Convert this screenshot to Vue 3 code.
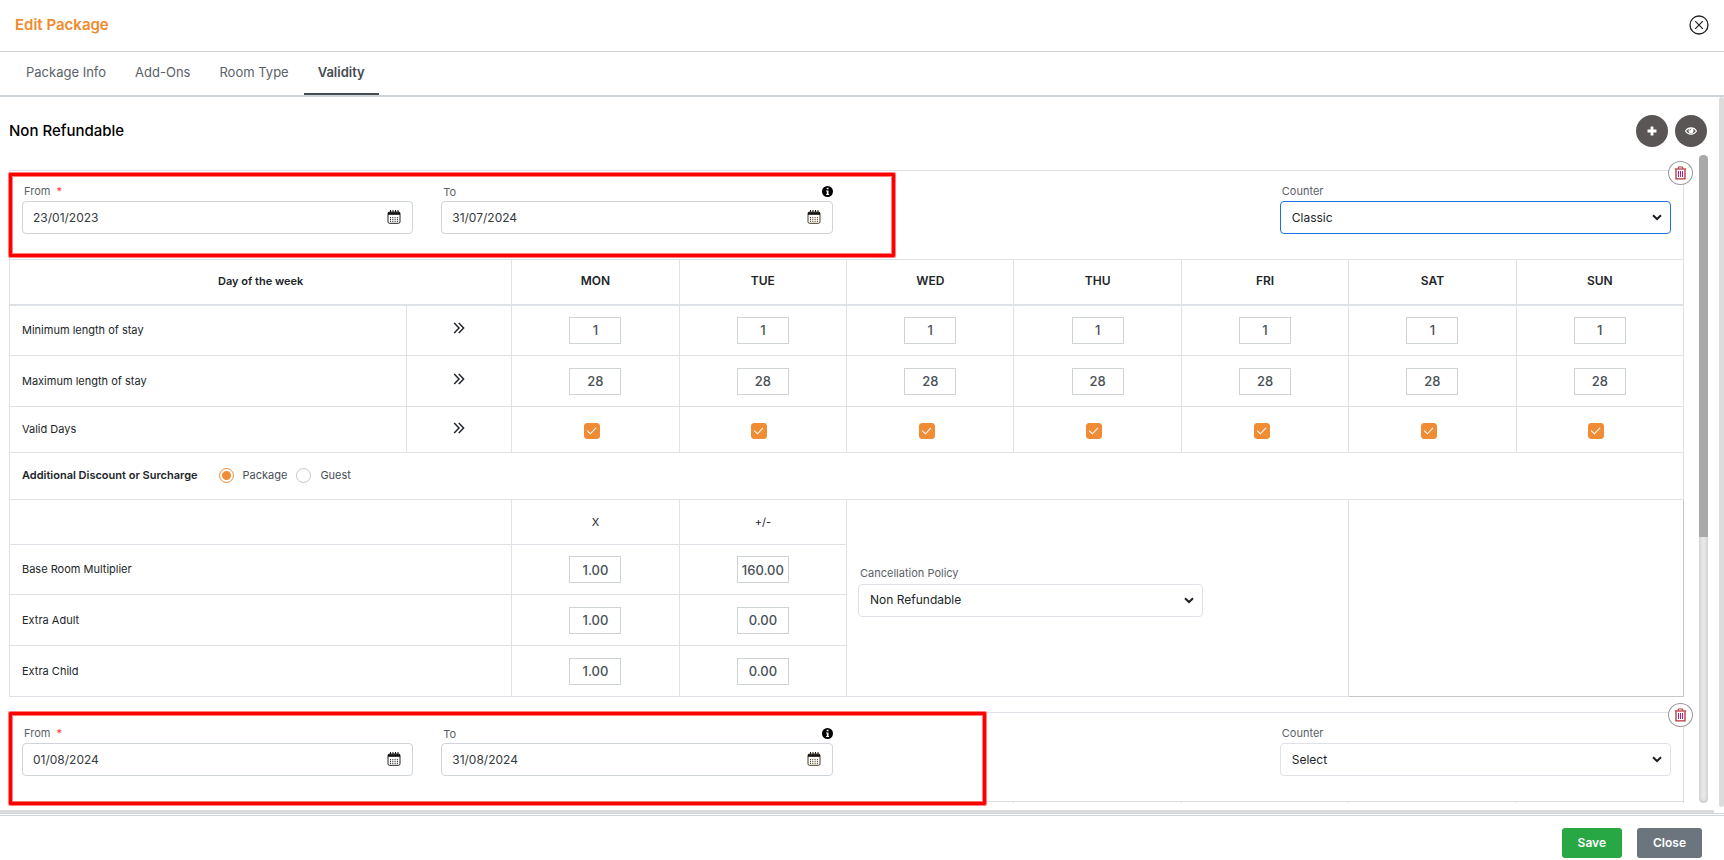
<script setup>
import { reactive } from 'vue'

const tabs = ['Package Info', 'Add-Ons', 'Room Type', 'Validity']
const activeTab = 'Validity'
const days = ['MON', 'TUE', 'WED', 'THU', 'FRI', 'SAT', 'SUN']

const periods = reactive([
  {
    id: 'p1', from: '23/01/2023', to: '31/07/2024', counter: 'Classic', focused: true, expanded: true,
    stay: [
      { label: 'Minimum length of stay', values: days.map(() => '1') },
      { label: 'Maximum length of stay', values: days.map(() => '28') }
    ],
    valid: days.map(() => true),
    basis: 'Package',
    rates: [
      { label: 'Base Room Multiplier', factor: '1.00', amount: '160.00' },
      { label: 'Extra Adult', factor: '1.00', amount: '0.00' },
      { label: 'Extra Child', factor: '1.00', amount: '0.00' }
    ],
    policy: 'Non Refundable'
  },
  { id: 'p2', from: '01/08/2024', to: '31/08/2024', counter: 'Select', focused: false, expanded: false }
])
</script>

<template>
  <div class="modal">
    <header class="modal-head">
      <h1>Edit Package</h1>
      <button class="icon-btn" type="button" aria-label="Dismiss">
        <svg width="20" height="20" viewBox="0 0 20 20" fill="none" stroke="#222">
          <circle cx="10" cy="10" r="9" stroke-width="1.3" />
          <path d="M6.2 6.2l7.6 7.6M13.8 6.2l-7.6 7.6" stroke-width="1.2" />
        </svg>
      </button>
    </header>

    <nav class="tabs">
      <a v-for="t in tabs" :key="t" href="#" :class="{ active: t === activeTab }">{{ t }}</a>
    </nav>

    <main class="body">
      <div class="pane">
        <div class="pane-head">
          <h2>Non Refundable</h2>
          <div class="actions">
            <button type="button" class="round" aria-label="Add">
              <svg width="10" height="10" viewBox="0 0 10 10"><path d="M5 .5v9M.5 5h9" stroke="#fff" stroke-width="2.8" /></svg>
            </button>
            <button type="button" class="round" aria-label="Preview">
              <svg width="12" height="8" viewBox="0 0 12 8">
                <path d="M.5 4C3 -.2 9 -.2 11.500 4 9 8.200 3 8.200 .5 4z" fill="none" stroke="#fff" stroke-width="1.100" />
                <circle cx="6" cy="3.700" r="2.500" fill="#fff" />
                <path d="M4.600 3.600A1.500 1.500 0 0 1 6 2.300" stroke="#5a5655" stroke-width=".7" fill="none" />
              </svg>
            </button>
          </div>
        </div>

        <div class="scroll-row">
          <div class="list-wrap">
            <div class="list">
              <section v-for="p in periods" :key="p.id" class="period">
                <table>
                  <colgroup>
                    <col />
                    <col class="c-arrow" />
                    <col v-for="d in days" :key="d" class="c-day" />
                  </colgroup>
                  <tbody>
                    <tr>
                      <td colspan="9" class="form-cell">
                        <div class="form">
                          <div class="field">
                            <label :for="p.id + '-from'">From&nbsp; <span class="req">*</span></label>
                            <div class="control">
                              <input :id="p.id + '-from'" v-model="p.from" type="text" />
                              <svg class="cal" width="14" height="14" viewBox="0 0 14 14">
                                <path d="M3.500 0v2M6 0v2M8.500 0v2M11 0v2" stroke="#111" />
                                <rect x="1" y="2" width="12" height="11.300" rx="1.500" fill="#fff" stroke="#222" />
                                <path d="M1 2.200h12v2.600H1z" fill="#111" />
                                <path d="M3.500 7v5M5.800 7v5M8.100 7v5M10.400 7v5" stroke="#333" stroke-dasharray="1.200 .7" />
                              </svg>
                            </div>
                          </div>
                          <div class="field">
                            <div class="label-line">
                              <label :for="p.id + '-to'">To</label>
                              <svg width="11" height="11" viewBox="0 0 11 11">
                                <circle cx="5.500" cy="5.500" r="5.500" />
                                <path d="M4.700 1.800h1.800v1.500H4.700zM4.200 4.400h2.300v3.500h.6v1.100H4.200V7.900h.6V5.500h-.6z" fill="#fff" />
                              </svg>
                            </div>
                            <div class="control">
                              <input :id="p.id + '-to'" v-model="p.to" type="text" />
                              <svg class="cal" width="14" height="14" viewBox="0 0 14 14">
                                <path d="M3.500 0v2M6 0v2M8.500 0v2M11 0v2" stroke="#111" />
                                <rect x="1" y="2" width="12" height="11.300" rx="1.500" fill="#fff" stroke="#4a3a20" />
                                <path d="M1 2.200h12v2.600H1z" fill="#111" />
                                <path d="M3.500 7v5M5.800 7v5M8.100 7v5M10.400 7v5" stroke="#5a4630" stroke-dasharray="1.200 .7" />
                              </svg>
                            </div>
                          </div>
                          <div class="field counter">
                            <label :for="p.id + '-counter'">Counter</label>
                            <div class="control">
                              <select :id="p.id + '-counter'" :class="{ focused: p.focused }">
                                <option>{{ p.counter }}</option>
                              </select>
                              <svg class="caret" width="10" height="7" viewBox="0 0 10 7"><path d="M1 1.200l4 3.800 4-3.800" fill="none" stroke="#1c2025" stroke-width="2" /></svg>
                            </div>
                          </div>
                        </div>
                      </td>
                    </tr>

                    <template v-if="p.expanded">
                      <tr class="week">
                        <th colspan="2" scope="col">Day of the week</th>
                        <th v-for="d in days" :key="d" scope="col" class="day">{{ d }}</th>
                      </tr>
                      <tr v-for="s in p.stay" :key="s.label" class="r-input">
                        <td class="name">{{ s.label }}</td>
                        <td class="arrow">
                          <button type="button" class="icon-btn" :aria-label="'Apply to all: ' + s.label">
                            <svg width="12" height="12" viewBox="0 0 12 12"><path d="M1.200 1l4.800 5-4.800 5M5.800 1l4.800 5-4.800 5" fill="none" stroke="#212529" stroke-width="1.500" /></svg>
                          </button>
                        </td>
                        <td v-for="(d, i) in days" :key="d" class="mid">
                          <input v-model="s.values[i]" class="num" type="text" :aria-label="s.label + ' ' + d" />
                        </td>
                      </tr>
                      <tr class="r-valid">
                        <td class="name">Valid Days</td>
                        <td class="arrow">
                          <button type="button" class="icon-btn" aria-label="Apply to all: Valid Days">
                            <svg width="12" height="12" viewBox="0 0 12 12"><path d="M1.200 1l4.800 5-4.800 5M5.800 1l4.800 5-4.800 5" fill="none" stroke="#212529" stroke-width="1.500" /></svg>
                          </button>
                        </td>
                        <td v-for="(d, i) in days" :key="d" class="mid">
                          <label class="check">
                            <input v-model="p.valid[i]" type="checkbox" :aria-label="'Valid ' + d" />
                            <svg width="16" height="16" viewBox="0 0 16 16"><path d="M3.200 7.600l3.200 3.200 5.600-6" fill="none" stroke="#fff" stroke-width="1.100" /></svg>
                          </label>
                        </td>
                      </tr>
                      <tr class="r-basis">
                        <td colspan="9" class="name">
                          <div class="basis">
                            <strong>Additional Discount or Surcharge</strong>
                            <label v-for="b in ['Package', 'Guest']" :key="b">
                              <input v-model="p.basis" type="radio" :name="p.id + '-basis'" :value="b" />{{ b }}
                            </label>
                          </div>
                        </td>
                      </tr>
                      <tr class="r-sub">
                        <td colspan="2"></td>
                        <td class="mid">X</td>
                        <td class="mid">+/-</td>
                        <td colspan="3" rowspan="4" class="policy">
                          <label :for="p.id + '-policy'">Cancellation Policy</label>
                          <div class="control">
                            <select :id="p.id + '-policy'"><option>{{ p.policy }}</option></select>
                            <svg class="caret" width="10" height="7" viewBox="0 0 10 7"><path d="M1 1.200l4 3.800 4-3.800" fill="none" stroke="#1c2025" stroke-width="2" /></svg>
                          </div>
                        </td>
                        <td colspan="2" rowspan="4" class="blank"></td>
                      </tr>
                      <tr v-for="r in p.rates" :key="r.label" class="r-input">
                        <td colspan="2" class="name">{{ r.label }}</td>
                        <td class="mid"><input v-model="r.factor" class="num" type="text" :aria-label="r.label + ' multiplier'" /></td>
                        <td class="mid"><input v-model="r.amount" class="num" type="text" :aria-label="r.label + ' amount'" /></td>
                      </tr>
                    </template>
                    <tr v-else class="week">
                      <td colspan="2"></td>
                      <td v-for="d in days" :key="d"></td>
                    </tr>
                  </tbody>
                </table>
                <button type="button" class="trash" aria-label="Delete period">
                  <svg width="13" height="14" viewBox="0 0 13 14" fill="none" stroke="#b5303a">
                    <path d="M.8 3h11.400" stroke-width="1.200" />
                    <path d="M4.300 2.800V1h4.400v1.800" />
                    <path d="M2 3.200v9.600h9V3.200" stroke-width="1.300" />
                    <path d="M4.500 5v6M6.500 5v6M8.500 5v6" stroke="#b0208a" />
                  </svg>
                </button>
              </section>
            </div>
            <div class="mark mark-a"></div>
            <div class="mark mark-b"></div>
          </div>
          <div class="bar" aria-hidden="true"><div class="thumb"></div></div>
        </div>
      </div>
      <div class="outer-v" aria-hidden="true"></div>
      <div class="outer-h" aria-hidden="true"></div>
    </main>

    <footer class="modal-foot">
      <button type="button" class="btn save">Save</button>
      <button type="button" class="btn close">Close</button>
    </footer>
  </div>
</template>

<style>
body { background: #fff; }
</style>

<style scoped>
* { box-sizing: border-box; }
.modal {
  display: flex;
  flex-direction: column;
  height: 100vh;
  overflow: hidden;
  background: #fff;
  color: #212529;
  font-family: Inter, "Liberation Sans", sans-serif;
  font-size: 11px;
  line-height: 18px;
}
button, input, select { font: inherit; color: inherit; margin: 0; }
h1, h2 { margin: 0; }
svg { display: block; }

.modal-head {
  display: flex;
  flex: none;
  align-items: center;
  justify-content: space-between;
  height: 52px;
  padding: 0 15px 2px;
  border-bottom: 1px solid #ced2d6;
}
h1 { color: #f08a2c; font-size: 15px; font-weight: 600; line-height: 24px; }
.icon-btn { padding: 0; border: 0; background: none; cursor: pointer; }

.tabs {
  display: flex;
  flex: none;
  gap: 1px;
  height: 45px;
  padding-left: 12px;
  border-bottom: 2px solid #ced4d8;
}
.tabs a {
  padding: 10px 14px 0;
  border-bottom: 2px solid transparent;
  color: #5b6168;
  font-size: 13px;
  line-height: 20px;
  text-decoration: none;
}
.tabs a.active { border-color: #454b52; color: #454b52; font-weight: 600; }

.body {
  display: grid;
  flex: 1;
  grid-template-columns: minmax(0, 1fr) 5px;
  grid-template-rows: minmax(0, 1fr) 3px;
  column-gap: 1px;
  min-height: 0;
  border-bottom: 1px solid #ced4da;
}
.outer-v { margin-bottom: 3px; background: #dcdcdc; border-radius: 3px; }
.outer-h { margin-right: 4px; background: #dcdcdc; }
.pane { display: flex; flex-direction: column; min-height: 0; padding: 18px 10px 7px 9px; }
.pane-head { display: flex; flex: none; align-items: center; justify-content: space-between; height: 40px; padding-bottom: 8px; }
h2 { color: #000; font-size: 15px; font-weight: 500; line-height: 24px; }
.actions { display: flex; gap: 7px; margin-right: 1px; }
.round {
  display: grid;
  place-items: center;
  width: 32px;
  height: 32px;
  padding: 0;
  border: 0;
  border-radius: 50%;
  background: #5a5655;
}

.scroll-row { display: flex; flex: 1; gap: 5px; min-height: 0; }
.list-wrap { position: relative; flex: 1; min-width: 0; }
.list { height: 100%; padding: 15px 10px 0 0; overflow: hidden; }
.bar { width: 9px; border-radius: 5px; background: #e9e9e9; box-shadow: inset 0 0 4px #b5b5b5; }
.thumb { height: 59%; border-radius: 5px 5px 0 0; background: #a9a9a9; }

.period { position: relative; margin-bottom: 15px; }
table { width: 100%; border-collapse: collapse; table-layout: fixed; }
td, th { padding: 0 12px; border: 1px solid #dee2e6; vertical-align: middle; }
.c-arrow { width: 105px; }
.c-day { width: 10%; }
.form-cell { height: 89px; padding-top: 11px; vertical-align: top; }
.form { display: grid; grid-template-columns: repeat(4, minmax(0, 1fr)); column-gap: 28px; }
.counter { grid-column: 4; }
label { color: #5b6168; }
.field > label, .label-line label, .policy > label { display: block; padding: 0 2px; }
.field > label, .label-line { height: 19px; }
.label-line { display: flex; align-items: center; justify-content: space-between; }
.req { color: #f33; }
.control { position: relative; }
.control input, select {
  display: block;
  width: 100%;
  height: 33px;
  padding: 0 10px;
  border: 1px solid #ced4da;
  border-radius: 4px;
  background: #fff;
  color: #343a40;
  font-size: 12px;
  outline: 0;
}
.control select { appearance: none; padding: 0 11px; border-color: #dee2e6; color: #212529; }
.control select.focused { border-color: #1b74e4; }
.cal { position: absolute; top: 9px; right: 12px; }
.caret { position: absolute; top: 13px; right: 9px; pointer-events: none; }

.week th, .week td { height: 45px; border-bottom-width: 2px; }
.week th { padding-bottom: 2px; font-weight: 600; text-align: center; }
.week .day { font-size: 12px; }
.r-input td { height: 51px; }
.r-input .name, .r-valid .name { padding-bottom: 1px; }
.r-valid td { height: 46px; }
.r-basis td { height: 47px; padding-bottom: 2px; }
.r-sub td { height: 45px; }
.r-sub + .r-input td { height: 50px; }
.mid { text-align: center; }
.arrow { text-align: center; }
.arrow svg { display: inline-block; }
.num {
  display: block;
  width: 52px;
  height: 27px;
  margin: 0 auto;
  padding: 0;
  border: 1px solid #ced4d6;
  border-radius: 0;
  color: #495057;
  font-size: 13px;
  font-weight: 500;
  text-align: center;
}
.check { display: inline-grid; margin: 2px 7px 0 0; vertical-align: middle; }
.check > * { grid-area: 1 / 1; }
.check input { appearance: none; width: 16px; height: 16px; border-radius: 3px; border: 1px solid #ccc; }
.check input:checked { border-color: #f08c34; background: #f08c34; }
.basis { display: flex; align-items: center; }
.basis strong { margin-right: 21px; font-weight: 600; }
.basis label { display: flex; align-items: center; margin-right: 9px; color: #495057; }
.basis input {
  appearance: none;
  width: 15px;
  height: 15px;
  margin-right: 9px;
  border: 1px solid #c4c8cc;
  border-radius: 50%;
}
.basis input:checked { border-color: #f08c34; background: radial-gradient(circle, #f08c34 4px, #fff 5px); }
.r-sub .policy { padding: 0 11px 16px; }
.policy > label { height: 20px; }
.policy .control { width: 345px; max-width: 100%; }
.blank { border-right-color: #c4c8c8; border-bottom-color: #c4c8c8; }

.trash {
  position: absolute;
  top: -9px;
  right: -9px;
  display: grid;
  place-items: center;
  width: 25px;
  height: 24px;
  padding: 0;
  border: 1px solid #999;
  border-radius: 50%;
  background: #fff;
}

/* Highlight frames lie over the list and are not clipped by it */
.mark {
  position: absolute;
  left: 0;
  border: 3px solid #f00;
  border-radius: 1px;
  box-shadow: 0 0 0 1px rgba(255, 0, 0, .5), inset 0 0 0 1px rgba(255, 0, 0, .5);
  pointer-events: none;
}
.mark-a { top: 18px; width: 886px; height: 84px; }
.mark-b { top: 557px; width: 977px; height: 93px; }

.modal-foot {
  display: flex;
  flex: none;
  gap: 15px;
  justify-content: flex-end;
  height: 45px;
  margin-top: 1px;
  padding: 12px 22px 0;
  border-top: 1px solid #ced4da;
}
.btn { height: 30px; padding: 0 16px; border: 0; border-radius: 3px; color: #fff; font-size: 12px; font-weight: 600; }
.save { background: #28a745; }
.close { background: #6c757d; }
</style>
